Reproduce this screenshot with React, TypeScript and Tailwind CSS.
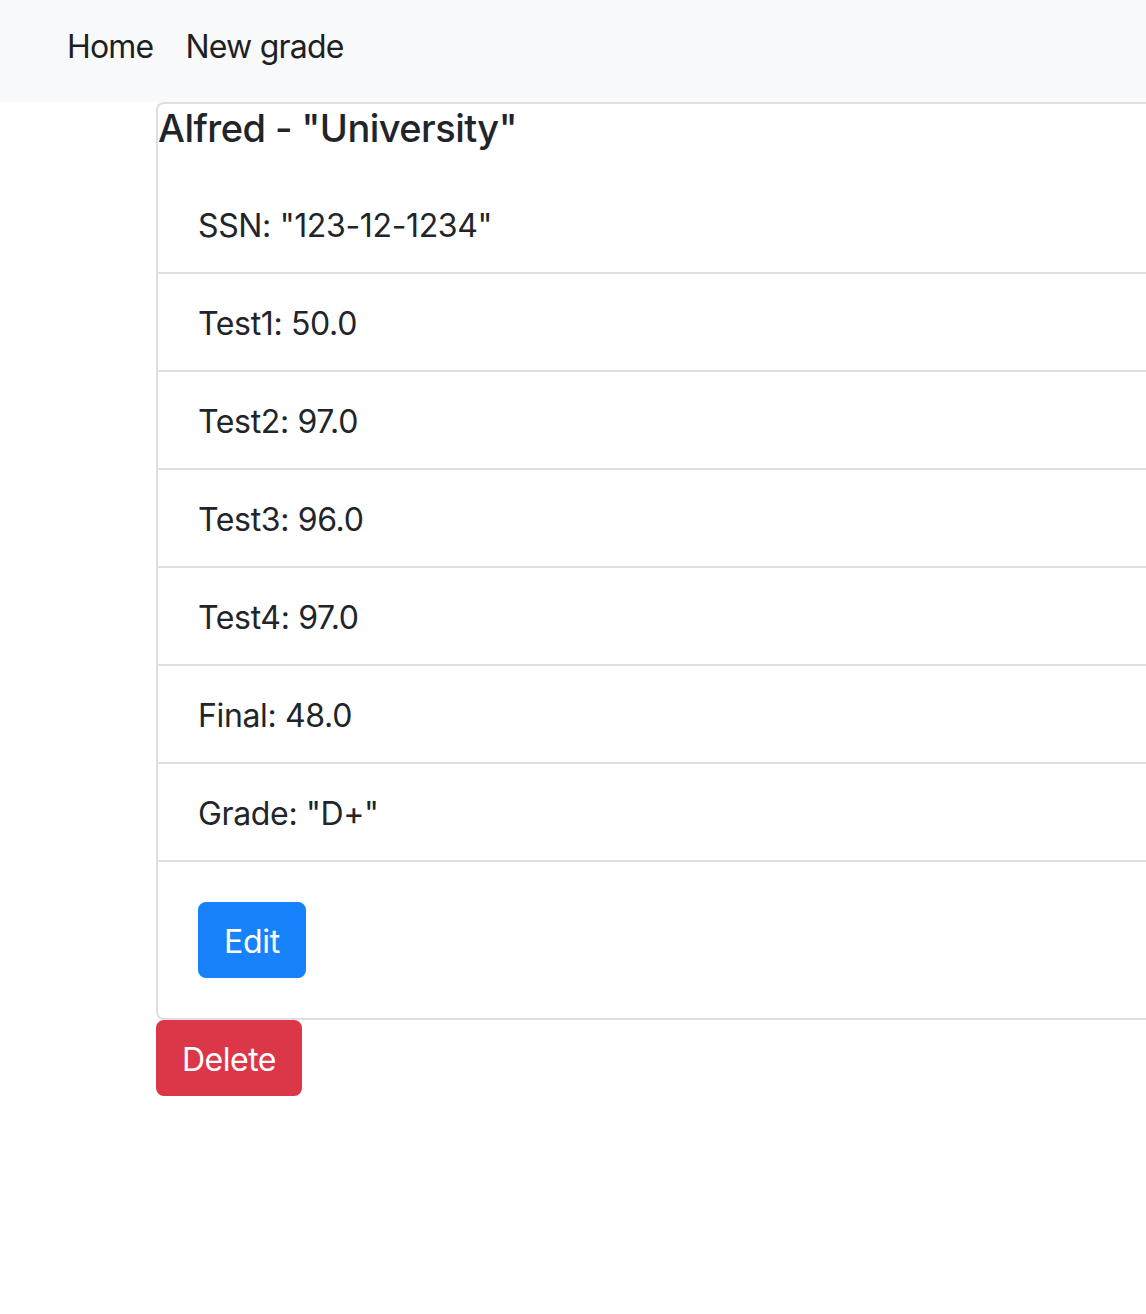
import React from "react";

const rows = [
  'SSN: "123-12-1234"',
  "Test1: 50.0",
  "Test2: 97.0",
  "Test3: 96.0",
  "Test4: 97.0",
  "Final: 48.0",
  'Grade: "D+"',
];

export default function App() {
  return (
    <div
      className="min-h-screen overflow-hidden bg-white text-[#212529]"
      style={{ fontFamily: "Inter, 'Liberation Sans', sans-serif" }}
    >
      <nav className="h-[102px] bg-[#f8f9fa] pl-[67px] pt-[23px]">
        <ul className="flex gap-[32px] text-[32px] leading-[48px] tracking-[-0.8px] text-[#1f1f1f]">
          <li>Home</li>
          <li>New grade</li>
        </ul>
      </nav>

      <div className="ml-[156px]">
        <div className="rounded-l-[8px] border-2 border-r-0 border-[#dfdfdf]">
          <h5 className="mb-[24px] pt-[1px] text-[38px] font-medium leading-[47px] tracking-[-0.55px]">
            Alfred - "University"
          </h5>
          <ul>
            {rows.map((r) => (
              <li
                key={r}
                className="border-b-2 border-[#dfdfdf] px-[40px] pt-[26px] pb-[22px] text-[32px] leading-[48px] tracking-[-0.35px]"
              >
                {r}
              </li>
            ))}
          </ul>
          <div className="p-[40px]">
            <button className="rounded-[8px] border-2 border-[#1782fc] bg-[#1782fc] px-[24px] pt-[14px] pb-[10px] text-[32px] leading-[48px] tracking-[-0.3px] text-white">
              Edit
            </button>
          </div>
        </div>
        <button className="rounded-[8px] border-2 border-[#db3749] bg-[#db3749] px-[24px] pt-[14px] pb-[10px] text-[32px] leading-[48px] tracking-[-0.5px] text-white">
          Delete
        </button>
      </div>
    </div>
  );
}
